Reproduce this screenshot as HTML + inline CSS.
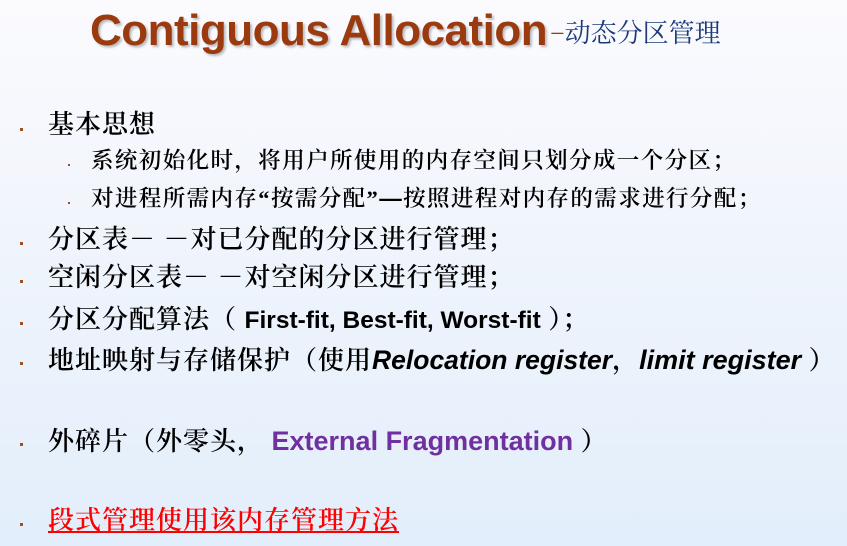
<!DOCTYPE html>
<html><head><meta charset="utf-8"><style>
html,body{margin:0;padding:0}
body{width:847px;height:546px;overflow:hidden;position:relative;background:linear-gradient(180deg,#fbfbfe 0%,#f1f5fc 40%,#e2eefb 100%);font-family:"Liberation Serif","Noto Serif CJK SC",serif;color:#000}
.t{position:absolute;white-space:nowrap;line-height:1}
.title{left:90px;top:9px;font-family:"Liberation Sans",sans-serif;font-weight:bold;font-size:44px;color:#9b3a0e;letter-spacing:-0.5px;text-shadow:2px 2px 2px rgba(0,0,0,.25)}
.sub{left:550px;top:21px;font-size:26px;color:#1c3a7a}
.m{font-size:26px;left:48px;letter-spacing:1px;font-weight:600}
.s{font-size:22.5px;left:91px;letter-spacing:1.4px;font-weight:600}
.b{position:absolute;width:3px;height:3px;background:#a05020}
.l{font-family:"Liberation Sans",sans-serif;font-weight:bold;letter-spacing:0}
</style></head><body>
<div class="t title">Contiguous Allocation</div>
<div class="t sub"><span style="color:#9b3a0e">−</span>动态分区管理</div>

<div class="b" style="left:20px;top:128px"></div>
<div class="t m" style="top:112px">基本思想</div>
<div class="b" style="left:68px;top:164px;width:2px;height:2px"></div>
<div class="t s" style="top:150px">系统初始化时，将用户所使用的内存空间只划分成一个分区；</div>
<div class="b" style="left:68px;top:202px;width:2px;height:2px"></div>
<div class="t s" style="top:188px">对进程所需内存“按需分配”<b style="font-family:'Liberation Sans'">—</b>按照进程对内存的需求进行分配；</div>

<div class="b" style="left:20px;top:242px"></div>
<div class="t m" style="top:227px">分区表－ －对已分配的分区进行管理；</div>
<div class="b" style="left:20px;top:280px"></div>
<div class="t m" style="top:265px">空闲分区表－ －对空闲分区进行管理；</div>
<div class="b" style="left:20px;top:322px"></div>
<div class="t m" style="top:307px">分区分配算法（ <span class="l" style="font-size:24.5px">First-fit, Best-fit, Worst-fit</span> ）；</div>
<div class="b" style="left:20px;top:362px"></div>
<div class="t m" style="top:347px">地址映射与存储保护（使用<i class="l" style="font-size:26.5px">Relocation register</i>，<i class="l" style="font-size:27px">limit register</i> ）</div>

<div class="b" style="left:20px;top:443px"></div>
<div class="t m" style="top:428px">外碎片（外零头， <span class="l" style="font-size:27px;color:#7030a0">External Fragmentation</span> ）</div>

<div class="b" style="left:20px;top:523px"></div>
<div class="t m" style="top:508px;color:#ff0000;text-decoration:underline;letter-spacing:1px">段式管理使用该内存管理方法</div>
</body></html>
